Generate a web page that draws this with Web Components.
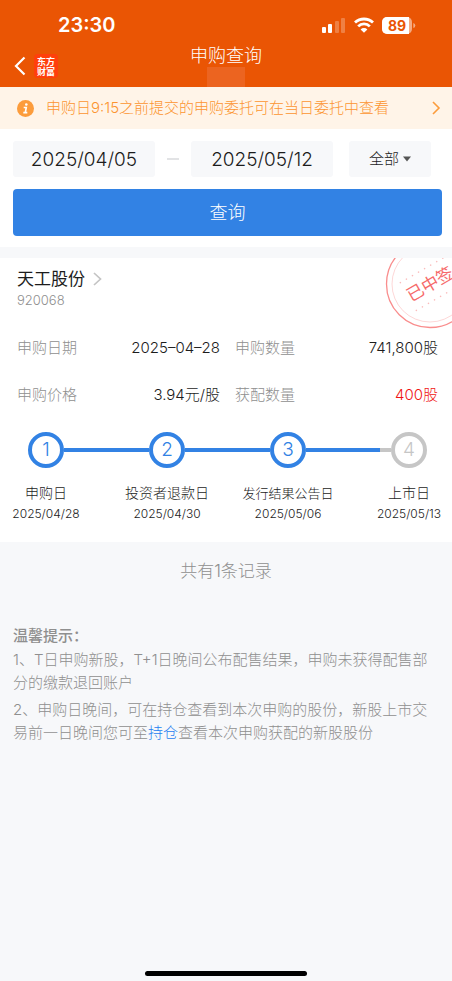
<!DOCTYPE html>
<html lang="zh-CN">
<head>
<meta charset="utf-8">
<meta name="viewport" content="width=device-width, initial-scale=1">
<title>申购查询</title>
<style>
  html { height: 100%; }
  body {
    margin: 0; min-height: 100%; display: flex; flex-direction: column;
    background: #f7f8fa; color: #1c1c1c;
    font: 300 15px/24px Inter, "Noto Sans CJK SC", sans-serif;
    --brand: #ea5504; --blue: #3282e4; --muted: #8f8f8f; --panel: #f7f8fa;
  }
</style>
</head>
<body>
<app-header heading="申购查询" time="23:30" battery="89"></app-header>
<notice-bar>申购日9:15之前提交的申购委托可在当日委托中查看</notice-bar>
<query-form from="2025/04/05" to="2025/05/12"></query-form>
<stock-card name="天工股份" code="920068" stamp="已中签">
  <info-item slot="info" label="申购日期">2025–04–28</info-item>
  <info-item slot="info" label="申购数量">741,800股</info-item>
  <info-item slot="info" label="申购价格">3.94元/股</info-item>
  <info-item slot="info" label="获配数量" highlight>400股</info-item>
  <step-track slot="steps">
    <step-item num="1" date="2025/04/28">申购日</step-item>
    <step-line></step-line>
    <step-item num="2" date="2025/04/30">投资者退款日</step-item>
    <step-line></step-line>
    <step-item num="3" date="2025/05/06" small>发行结果公告日</step-item>
    <step-line partial></step-line>
    <step-item num="4" date="2025/05/13" pending>上市日</step-item>
  </step-track>
</stock-card>
<page-tips></page-tips>
<home-indicator></home-indicator>

<script>
const define = (tag, render) => customElements.define(tag, class extends HTMLElement {
  constructor() { super(); this.attachShadow({ mode: 'open' }); }
  connectedCallback() { this.shadowRoot.innerHTML = render(this); }
});
const attr = (el, n) => el.getAttribute(n) || '';

define('app-header', el => `
<style>
  :host { display: block; background: var(--brand); color: #fff; }
  .status { display: flex; justify-content: space-between; align-items: center; padding: 7px 36px 1px 58px; height: 36px; }
  time { font-size: 20px; font-weight: 600; }
  .icons { display: flex; align-items: center; gap: 8px; }
  svg { display: block; }
  nav { display: grid; grid-template-columns: 1fr auto 1fr; height: 43px; }
  .left { display: flex; align-items: center; gap: 8px; padding-left: 14px; }
  button { border: 0; padding: 0; background: none; color: inherit; }
  h1 { margin: 0; font-size: 18px; line-height: 23px; font-weight: 300; }
  .account { width: 38px; height: 20px; margin: 0 auto; background: #ec6420; }
</style>
<div class="status">
  <time>${attr(el, 'time')}</time>
  <div class="icons">
    <svg width="25" height="16" viewBox="0 0 25 16" fill="#fff" role="img" aria-label="信号">
      <rect x="1" y="10" width="4" height="6" rx="1"/><rect x="7" y="7" width="4" height="9" rx="1"/>
      <g opacity=".25"><rect x="14" y="4" width="4" height="12" rx="1"/><rect x="20" y="1" width="4" height="15" rx="1"/></g>
    </svg>
    <svg width="20" height="16" viewBox="0 0 20 16" role="img" aria-label="无线网络">
      <g fill="none" stroke="#fff" stroke-width="2.8"><path d="M1 5.600a13 13 0 0 1 18 0"/><path d="M4.200 9.400a8 8 0 0 1 11.600 0"/></g>
      <path d="M10 15.800 6.600 12.400a4.800 4.800 0 0 1 6.800 0z" fill="#fff"/>
    </svg>
    <svg width="34" height="17" viewBox="0 0 34 17" role="img" aria-label="电量">
      <rect width="30" height="17" rx="5" fill="#fff" opacity=".5"/>
      <path d="M5 0H27V17H5a5 5 0 0 1-5-5V5a5 5 0 0 1 5-5z" fill="#fff"/>
      <path d="M31.300 6q2 .5 2 2.500t-2 2.500z" fill="#fff" opacity=".5"/>
      <text x="15" y="14" text-anchor="middle" font-size="14" font-weight="700" fill="#ea5504">${attr(el, 'battery')}</text>
    </svg>
  </div>
</div>
<nav>
  <div class="left">
    <button aria-label="返回"><svg width="12" height="20" viewBox="0 0 12 20"><path d="M10.500 1.500 2 10l8.500 8.500" fill="none" stroke="#fff" stroke-width="2.200"/></svg></button>
    <svg width="24" height="24" viewBox="0 0 24 24" role="img" aria-label="东方财富">
      <rect width="24" height="24" rx="4" fill="#ff3f0c"/>
      <g fill="#fff" font-family="'Noto Sans CJK SC', sans-serif" font-weight="700" font-size="9" text-anchor="middle"><text x="12" y="11">东方</text><text x="12" y="21">财富</text></g>
    </svg>
  </div>
  <div><h1>${attr(el, 'heading')}</h1><div class="account"></div></div>
</nav>`);

define('notice-bar', () => `
<style>
  :host { display: flex; align-items: center; height: 42px; padding: 0 11px 0 17px; background: #fff4e8; color: #fc9430; }
  p { margin: 0 auto 0 12px; }
  svg { display: block; flex: none; }
  button { border: 0; padding: 0; background: none; }
</style>
<svg width="17" height="17" viewBox="0 0 17 17" aria-hidden="true"><circle cx="8.500" cy="8.500" r="8.500" fill="#fc9c3c"/><circle cx="9.300" cy="4.500" r="1.300" fill="#fff"/><path d="M6.700 7.500h2.600l-1 5M6.300 12.600h4" fill="none" stroke="#fff" stroke-width="1.600"/></svg>
<p><slot></slot></p>
<button aria-label="查看详情"><svg width="10" height="14" viewBox="0 0 10 14"><path d="M2 1l6 6-6 6" fill="none" stroke="#fc9c3c" stroke-width="1.600"/></svg></button>`);

define('query-form', el => `
<style>
  :host { display: block; background: #fff; padding: 12px 10px 11px 13px; }
  form { display: grid; grid-template-columns: minmax(0, 1fr); gap: 12px; }
  .row { display: flex; align-items: center; margin-right: 11px; }
  input, select, button { font: inherit; color: inherit; border: 0; border-radius: 3px; background: var(--panel); height: 36px; box-sizing: border-box; }
  input { flex: 1; width: 0; min-width: 0; padding: 0; text-align: center; font-size: 19px; }
  .dash { flex: none; width: 12px; height: 2px; margin: 0 12px; background: #e2e3e5; }
  .pick { flex: none; display: grid; width: 82px; margin-left: 16px; }
  .pick > * { grid-area: 1 / 1; }
  select { appearance: none; padding: 0 0 0 20px; width: 100%; }
  .pick svg { place-self: center end; margin-right: 20px; pointer-events: none; }
  button { height: 47px; border-radius: 4px; background: var(--blue); color: #fff; font-size: 18px; }
</style>
<form onsubmit="return false">
  <div class="row">
    <input type="text" aria-label="开始日期" value="${attr(el, 'from')}">
    <span class="dash"></span>
    <input type="text" aria-label="结束日期" value="${attr(el, 'to')}">
    <div class="pick">
      <select aria-label="筛选"><option>全部</option></select>
      <svg width="8" height="6" viewBox="0 0 8 6" aria-hidden="true"><path d="M0 .5h8L4 5.500z" fill="#555"/></svg>
    </div>
  </div>
  <button type="submit">查询</button>
</form>`);

define('stock-card', el => {
  const dots = (x, y, n) => Array.from({ length: n }, (_, i) => `<circle cx="${x + i * 7}" cy="${y}" r=".8"/>`).join('');
  return `
<style>
  :host { display: block; position: relative; overflow: hidden; margin-top: 11px; background: #fff; padding: 9px 0 18px; }
  header { padding: 0 17px; }
  a { display: flex; width: max-content; align-items: center; gap: 8px; color: inherit; text-decoration: none; }
  h2 { margin: 0; font-size: 17px; line-height: 24px; font-weight: 400; }
  .code { font-size: 13px; line-height: 18px; color: var(--muted); }
  .stamp { position: absolute; top: 0; right: 0; }
  .info { display: grid; grid-template-columns: 1fr 1fr; column-gap: 15px; margin: 15px 14px 14px 17px; }
</style>
<header>
  <a href="#stock"><h2>${attr(el, 'name')}</h2><svg width="9" height="14" viewBox="0 0 9 14" aria-hidden="true"><path d="M1 1l6.500 6L1 13" fill="none" stroke="#c4c4c4" stroke-width="1.700"/></svg></a>
  <div class="code">${attr(el, 'code')}</div>
</header>
<svg class="stamp" width="67" height="71" viewBox="385 258 67 71">
  <g fill="none" stroke="#f98d8d"><circle cx="430" cy="284" r="43.500" stroke-width="1.300"/><circle cx="430" cy="284" r="38" stroke-width="1" opacity=".35"/></g>
  <g transform="rotate(-30 430 284)" fill="#f66a6a">
    <g opacity=".45">${dots(405, 268, 8)}${dots(405, 300, 8)}</g>
    <text x="430" y="290" text-anchor="middle" font-size="17" font-weight="400">${attr(el, 'stamp')}</text>
  </g>
</svg>
<div class="info"><slot name="info"></slot></div>
<slot name="steps"></slot>`;
});

define('info-item', el => `
<style>
  :host { display: flex; justify-content: space-between; line-height: 47px; }
  :host([highlight]) .value { color: #f01414; }
  .label { color: var(--muted); }
</style>
<span class="label">${attr(el, 'label')}</span><span class="value"><slot></slot></span>`);

define('step-track', () => `
<style>:host { display: flex; padding: 0 25px 0 28px; }</style><slot></slot>`);

define('step-line', () => `
<style>
  :host { flex: 1; height: 4px; margin-top: 16px; background: var(--blue); }
  :host([partial]) { background: linear-gradient(to right, var(--blue) 87%, #c6c6c6 87%); }
</style>`);

define('step-item', el => `
<style>
  :host { display: flex; flex-direction: column; align-items: center; width: 36px; white-space: nowrap; --tone: var(--blue); }
  :host([pending]) { --tone: #c6c6c6; }
  .ring { box-sizing: border-box; width: 36px; height: 36px; border: 4px solid var(--tone); border-radius: 50%; color: var(--tone); font-size: 19px; line-height: 28px; text-align: center; margin-bottom: 14px; }
  .name { font-size: 14px; line-height: 22px; }
  :host([small]) .name { font-size: 13px; }
  time { font-size: 12px; line-height: 20px; }
</style>
<div class="ring">${attr(el, 'num')}</div>
<div class="name"><slot></slot></div>
<time>${attr(el, 'date')}</time>`);

define('page-tips', () => `
<style>
  :host { display: block; padding: 17px 13px 0; color: var(--muted); }
  .total { margin: 0 0 41px; font-size: 17px; text-align: center; }
  h3 { margin: 0; font-size: 15px; font-weight: 500; }
  .tip { margin: 0 0 4px; line-height: 23px; }
  a { color: #1e80f0; text-decoration: none; }
</style>
<p class="total">共有1条记录</p>
<h3>温馨提示：</h3>
<p class="tip">1、T日申购新股，T+1日晚间公布配售结果，申购未获得配售部分的缴款退回账户</p>
<p class="tip">2、申购日晚间，可在持仓查看到本次申购的股份，新股上市交易前一日晚间您可至<a href="#positions">持仓</a>查看本次申购获配的新股股份</p>`);

define('home-indicator', () => `
<style>
  :host { display: block; margin-top: auto; padding-bottom: 5px; }
  div { width: 36%; height: 5px; margin: 0 auto; border-radius: 3px; background: #000; }
</style><div></div>`);
</script>
</body>
</html>
